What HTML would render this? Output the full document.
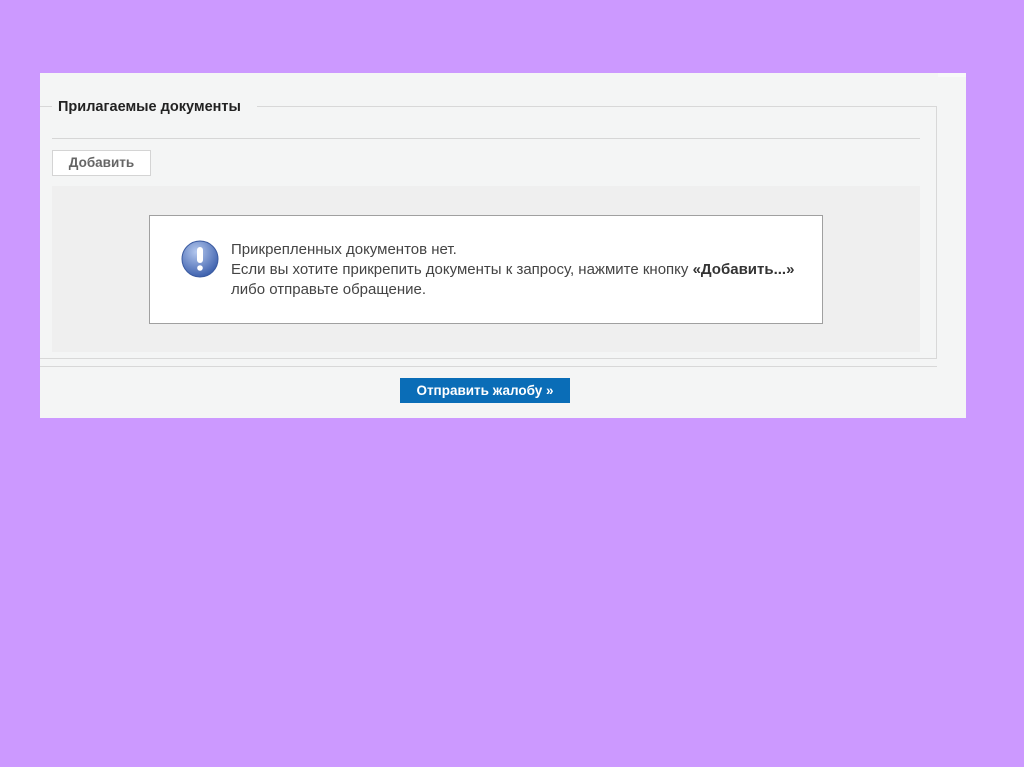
<!DOCTYPE html>
<html><head><meta charset="utf-8"><style>
body{margin:0;width:1024px;height:767px;background:#cc99ff;position:relative;overflow:hidden;font-family:"Liberation Sans",Arial,sans-serif}
.a{position:absolute;box-sizing:border-box}
</style></head><body>
<div class="a" style="left:40px;top:73px;width:926px;height:345px;background:#f4f5f5"></div>
<div class="a" style="left:938px;top:73px;width:28px;height:4px;background:#f8f9f9"></div>
<div class="a" style="left:40px;top:106px;width:12px;height:1px;background:#d8d8d8"></div>
<div class="a" style="left:257px;top:106px;width:680px;height:1px;background:#d8d8d8"></div>
<div class="a" style="left:936px;top:106px;width:1px;height:253px;background:#d8d8d8"></div>
<div class="a" style="left:40px;top:358px;width:897px;height:1px;background:#d8d8d8"></div>
<div class="a" style="left:58px;top:99px;font-size:14.5px;font-weight:600;color:#222;white-space:nowrap">Прилагаемые документы</div>
<div class="a" style="left:52px;top:138px;width:868px;height:1px;background:#d6d6d6"></div>
<div class="a" style="left:52px;top:150px;width:99px;height:26px;background:#fff;border:1px solid #d4d4d4;font-size:13.5px;font-weight:bold;color:#666;text-align:center;line-height:24px">Добавить</div>
<div class="a" style="left:52px;top:186px;width:868px;height:166px;background:#efefef"></div>
<div class="a" style="left:149px;top:215px;width:674px;height:109px;background:#fff;border:1px solid #a0a0a0"></div>
<svg class="a" style="left:181px;top:240px" width="38" height="38" viewBox="0 0 38 38">
<defs><radialGradient id="g" cx="40%" cy="30%" r="70%"><stop offset="0" stop-color="#b4c8ee"/><stop offset="1" stop-color="#3f62ae"/></radialGradient></defs>
<circle cx="19" cy="19" r="18" fill="url(#g)" stroke="#3a5aa0" stroke-width="1"/>
<rect x="16" y="7" width="6" height="16" rx="3" fill="#fff"/><circle cx="19" cy="28" r="2.8" fill="#fff"/>
</svg>
<div class="a" style="left:231px;top:240px;font-size:15px;color:#444;line-height:20px;white-space:nowrap">Прикрепленных документов нет.<br>Если вы хотите прикрепить документы к запросу, нажмите кнопку <b style="color:#333">«Добавить...»</b><br>либо отправьте обращение.</div>
<div class="a" style="left:40px;top:366px;width:897px;height:1px;background:#d8d8d8"></div>
<div class="a" style="left:400px;top:378px;width:170px;height:25px;background:#0a6db7;color:#fff;font-size:13.5px;font-weight:bold;text-align:center;line-height:25px">Отправить жалобу »</div>
</body></html>
